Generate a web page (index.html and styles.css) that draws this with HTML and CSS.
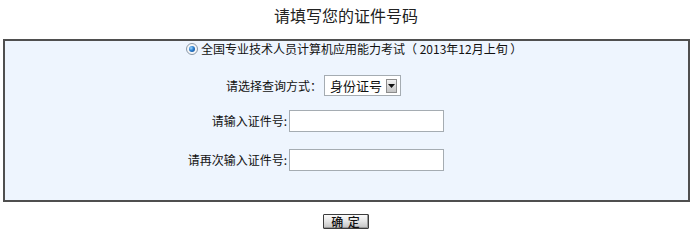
FILE: index.html
```html
<!DOCTYPE html>
<html lang="zh-CN">
<head>
<meta charset="utf-8">
<title>请填写您的证件号码</title>
<link rel="stylesheet" href="styles.css">
</head>
<body>
<h1 class="title">请填写您的证件号码</h1>
<form class="panel">
  <div class="row row-exam">
    <span class="radio"><span class="radio-dot"></span></span>
    <span class="exam-text">全国专业技术人员计算机应用能力考试（ 2013年12月上旬 ）</span>
  </div>
  <div class="row row-mode">
    <span class="label label-mode">请选择查询方式：</span>
    <div class="select">
      <span class="select-text">身份证号</span>
      <span class="select-arrow"><svg width="7" height="4" viewBox="0 0 7 4"><path d="M0 0H7L3.5 4Z" fill="#111"/></svg></span>
    </div>
  </div>
  <div class="row row-id">
    <span class="label label-id">请输入证件号:</span>
    <input class="field" type="text">
  </div>
  <div class="row row-id2">
    <span class="label label-id">请再次输入证件号:</span>
    <input class="field" type="text">
  </div>
</form>
<div class="actions">
  <button class="btn" type="button">确 定</button>
</div>
</body>
</html>
```
FILE: styles.css
```css
html, body {
  margin: 0;
  padding: 0;
  background: #ffffff;
}
body {
  font-family: "Noto Sans CJK SC", "DejaVu Sans", sans-serif;
  font-size: 12px;
  color: #111;
}
.title {
  margin: 0;
  padding-top: 5px;
  font-size: 16px;
  line-height: 20px;
  font-weight: normal;
  text-align: center;
  color: #222;
}
.panel {
  margin: 14px 2px 0 3px;
  height: 159px;
  border: 2px solid #4f4f4f;
  background: #eef5fe;
  display: flex;
  flex-direction: column;
}
.row {
  display: flex;
  align-items: center;
}
.row-exam {
  height: 16px;
  padding-left: 181px;
}
.radio {
  width: 10px;
  height: 10px;
  border-radius: 50%;
  border: 1px solid #8a98a8;
  background: #f4f6f8;
  display: flex;
  align-items: center;
  justify-content: center;
  margin-right: 3px;
}
.radio-dot {
  width: 6px;
  height: 6px;
  border-radius: 50%;
  background: radial-gradient(circle at 35% 35%, #9fd8ff 0, #2b7fd0 45%, #0b3f86 100%);
}
.exam-text {
  line-height: 16px;
  white-space: nowrap;
}
.row-mode {
  margin-top: 18px;
  height: 21px;
}
.label {
  text-align: right;
  white-space: nowrap;
  line-height: 16px;
}
.label-mode {
  width: 317px;
}
.label-id {
  width: 282px;
}
.select {
  margin-left: 2px;
  width: 75px;
  height: 19px;
  border: 1px solid #a5acb2;
  background: #ffffff;
  display: flex;
  align-items: center;
  justify-content: space-between;
}
.select-text {
  font-size: 13px;
  padding-left: 5px;
  line-height: 16px;
}
.select-arrow {
  width: 11px;
  height: 14px;
  margin-right: 3px;
  border: 1px solid #8d8d8d;
  background: linear-gradient(#f2f2f2, #c4c4c4);
  display: flex;
  align-items: center;
  justify-content: center;
  box-sizing: border-box;
}
.row-id {
  margin-top: 14px;
  height: 22px;
}
.row-id2 {
  margin-top: 17px;
}
.field {
  margin: 0 0 0 2px;
  padding: 0 3px;
  width: 155px;
  height: 22px;
  box-sizing: border-box;
  border: 1px solid #a5acb2;
  background: #ffffff;
  font: inherit;
  outline: none;
}
.actions {
  display: flex;
  justify-content: center;
  margin-top: 12px;
}
.btn {
  width: 46px;
  height: 15px;
  padding: 0;
  border: 1px solid #3c3c3c;
  border-radius: 1px;
  background: linear-gradient(#fbfbfb, #e4e4e4 50%, #c2c2c2);
  font-family: "Noto Sans CJK SC", sans-serif;
  font-size: 12px;
  font-weight: 500;
  letter-spacing: 1px;
  line-height: 13px;
  color: #111;
  box-shadow: inset -1px -1px 0 #9a9a9a;
}
```
